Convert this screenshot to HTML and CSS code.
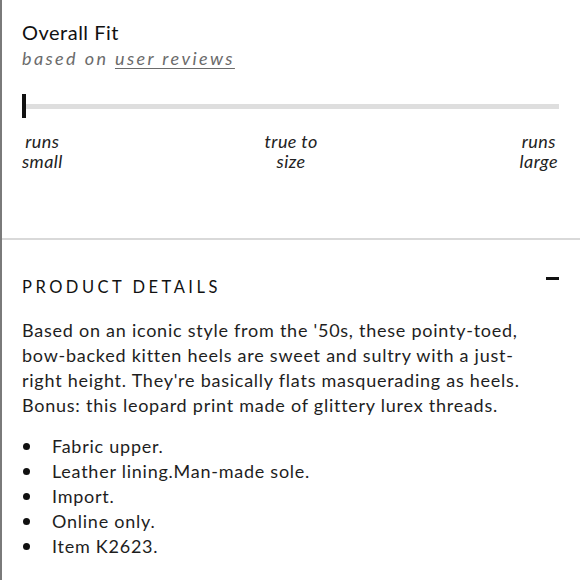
FILE: index.html
```html
<!DOCTYPE html>
<html>
<head>
<meta charset="utf-8">
<link rel="stylesheet" href="styles.css">
</head>
<body>
<div class="page">
  <section class="fit">
    <h2 class="fit-title">Overall Fit</h2>
    <p class="fit-sub">based on <span class="link">user reviews</span></p>
    <div class="slider">
      <div class="track"></div>
      <div class="marker"></div>
    </div>
    <div class="labels">
      <span class="lbl">runs<br>small</span>
      <span class="lbl">true to<br>size</span>
      <span class="lbl">runs<br>large</span>
    </div>
  </section>
  <section class="details">
    <div class="details-head">
      <h3 class="details-title">PRODUCT DETAILS</h3>
      <span class="minus"></span>
    </div>
    <p class="desc">Based on an iconic style from the '50s, these pointy-toed,<br>bow-backed kitten heels are sweet and sultry with a just-<br>right height. They're basically flats masquerading as heels.<br>Bonus: this leopard print made of glittery lurex threads.</p>
    <ul class="bullets">
      <li>Fabric upper.</li>
      <li>Leather lining.Man-made sole.</li>
      <li>Import.</li>
      <li>Online only.</li>
      <li>Item K2623.</li>
    </ul>
  </section>
</div>
</body>
</html>
```
FILE: styles.css
```css
html, body {
  margin: 0;
  padding: 0;
  background: #fff;
}
body {
  font-family: Lato, "Noto Sans", sans-serif;
  color: #1e1e1e;
}
.page {
  width: 580px;
  height: 580px;
  border-left: 2px solid #7a7a7a;
  box-sizing: border-box;
  overflow: hidden;
}
.fit {
  padding: 19px 20px 67px 20px;
  border-bottom: 2px solid #d9d9d9;
}
.fit-title {
  margin: 0;
  font-size: 20px;
  font-weight: 400;
  line-height: 26px;
  letter-spacing: 0.5px;
  color: #111;
}
.fit-sub {
  margin: 0;
  font-size: 18px;
  font-style: italic;
  letter-spacing: 2.4px;
  line-height: 26px;
  color: #6b6b6b;
}
.link {
  text-decoration: underline;
  text-underline-offset: 3px;
  text-decoration-thickness: 1px;
}
.slider {
  position: relative;
  height: 24px;
  margin-top: 23px;
  width: 537px;
  display: flex;
  align-items: center;
}
.track {
  height: 5px;
  width: 100%;
  background: #dedede;
}
.marker {
  position: absolute;
  left: 0;
  top: 0;
  width: 4px;
  height: 24px;
  background: #111;
}
.labels {
  display: flex;
  justify-content: space-between;
  width: 536px;
  margin-top: 13px;
}
.lbl {
  font-size: 18px;
  font-style: italic;
  line-height: 20px;
  color: #222;
  letter-spacing: 0.4px;
  text-align: center;
}
.details {
  padding: 0 20px;
}
.details-head {
  display: flex;
  justify-content: space-between;
  align-items: flex-start;
  margin-top: 37px;
  width: 537px;
}
.details-title {
  margin: 0;
  font-size: 16.5px;
  font-weight: 400;
  letter-spacing: 3.5px;
  line-height: 20px;
  color: #111;
}
.minus {
  width: 13px;
  height: 3px;
  background: #111;
  margin-top: 0;
}
.desc {
  margin: 21px 0 0 0;
  font-size: 18px;
  line-height: 25px;
  letter-spacing: 0.75px;
  color: #1e1e1e;
  white-space: nowrap;
}
.bullets {
  list-style: none;
  margin: 16px 0 0 0;
  padding: 0;
  font-size: 18px;
  line-height: 25px;
  letter-spacing: 0.75px;
}
.bullets li {
  display: flex;
  align-items: center;
}
.bullets li::before {
  content: "";
  width: 7px;
  height: 7px;
  border-radius: 50%;
  background: #111;
  margin-left: 1px;
  margin-right: 22px;
  flex: none;
}
```
